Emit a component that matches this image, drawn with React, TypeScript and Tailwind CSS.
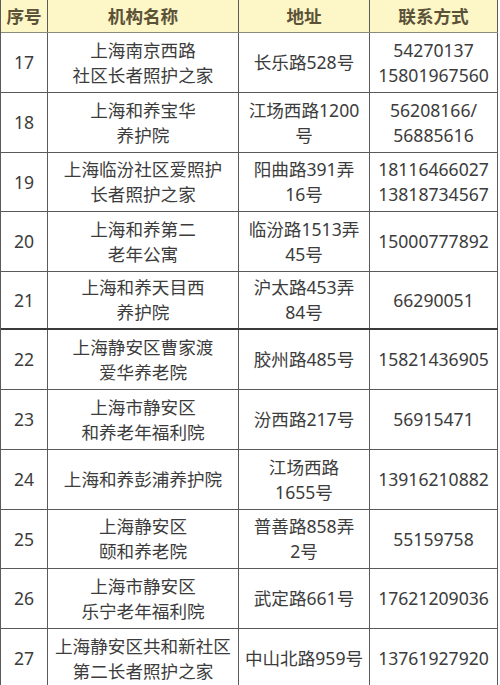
import React from "react";

const rows: { n: string; name: string[]; addr: string[]; tel: string[]; h: string }[] = [
  { n: "17", name: ["上海南京西路", "社区长者照护之家"], addr: ["长乐路528号"], tel: ["54270137", "15801967560"], h: "h-[60px]" },
  { n: "18", name: ["上海和养宝华", "养护院"], addr: ["江场西路1200", "号"], tel: ["56208166/", "56885616"], h: "h-[60px]" },
  { n: "19", name: ["上海临汾社区爱照护", "长者照护之家"], addr: ["阳曲路391弄", "16号"], tel: ["18116466027", "13818734567"], h: "h-[59px]" },
  { n: "20", name: ["上海和养第二", "老年公寓"], addr: ["临汾路1513弄", "45号"], tel: ["15000777892"], h: "h-[60px]" },
  { n: "21", name: ["上海和养天目西", "养护院"], addr: ["沪太路453弄", "84号"], tel: ["66290051"], h: "h-[58px]" },
  { n: "22", name: ["上海静安区曹家渡", "爱华养老院"], addr: ["胶州路485号"], tel: ["15821436905"], h: "h-[60px]" },
  { n: "23", name: ["上海市静安区", "和养老年福利院"], addr: ["汾西路217号"], tel: ["56915471"], h: "h-[60px]" },
  { n: "24", name: ["上海和养彭浦养护院"], addr: ["江场西路", "1655号"], tel: ["13916210882"], h: "h-[60px]" },
  { n: "25", name: ["上海静安区", "颐和养老院"], addr: ["普善路858弄", "2号"], tel: ["55159758"], h: "h-[59px]" },
  { n: "26", name: ["上海市静安区", "乐宁老年福利院"], addr: ["武定路661号"], tel: ["17621209036"], h: "h-[60px]" },
  { n: "27", name: ["上海静安区共和新社区", "第二长者照护之家"], addr: ["中山北路959号"], tel: ["13761927920"], h: "h-[60px]" },
];

const cell = "flex flex-col items-center justify-center text-center border-r border-[#5a5a5a] leading-[25px]";

export default function App() {
  return (
    <div
      className="w-[500px] h-[685px] overflow-hidden bg-white text-[#3c3c3c] text-[17.6px]"
      style={{ fontFamily: '"Noto Sans", "Noto Sans CJK SC", sans-serif' }}
    >
      <div className="w-[498px] border-l border-[#5a5a5a]">
        <div className="grid grid-cols-[47px_191px_131px_128px] h-[33px] bg-[#fdf6c6] border-b border-[#8a8a7a] font-bold text-[#5b5238]">
          <div className={cell}>序号</div>
          <div className={cell}>机构名称</div>
          <div className={cell}>地址</div>
          <div className={cell}>联系方式</div>
        </div>
        {rows.map((r, i) => (
          <div
            key={r.n}
            className={`grid grid-cols-[47px_191px_131px_128px] ${r.h} ${i === 4 ? "border-b-2 border-[#3a3a3a]" : "border-b border-[#5a5a5a]"}`}
          >
            <div className={cell}>{r.n}</div>
            <div className={`${cell} whitespace-nowrap`}>
              {r.name.map((t) => (
                <div key={t}>{t}</div>
              ))}
            </div>
            <div className={`${cell} whitespace-nowrap`}>
              {r.addr.map((t) => (
                <div key={t}>{t}</div>
              ))}
            </div>
            <div className={cell}>
              {r.tel.map((t) => (
                <div key={t}>{t}</div>
              ))}
            </div>
          </div>
        ))}
      </div>
    </div>
  );
}
